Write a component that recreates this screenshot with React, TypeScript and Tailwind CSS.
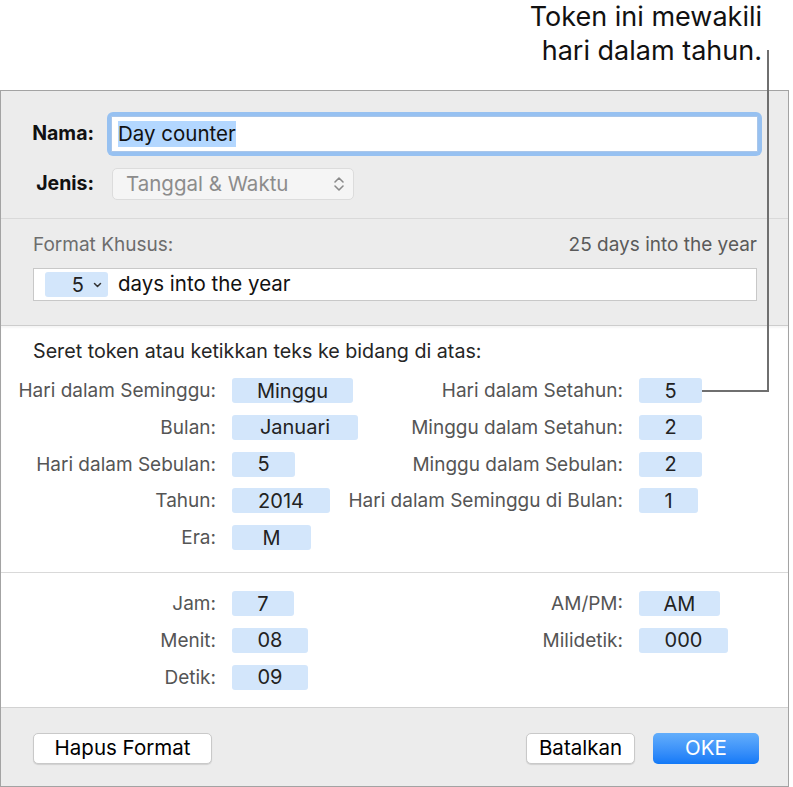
import { FC, ReactNode } from "react";

type Tok = { label: string; value: string; w: string };

const Token: FC<{ value: string; w: string }> = ({ value, w }) => (
  <div
    className={`flex h-[25px] shrink-0 items-center justify-center rounded-[3px] bg-[#d3e6fb] text-[20px] text-[#222] ${w}`}
  >
    {value}
  </div>
);

const Row: FC<{ t: Tok; labelW: string }> = ({ t, labelW }) => (
  <div className="flex h-[25px] items-center">
    <div
      className={`${labelW} shrink-0 whitespace-nowrap text-right text-[19px] leading-[25px] text-[#555]`}
    >
      {t.label}
    </div>
    <div className="ml-4">
      <Token value={t.value} w={t.w} />
    </div>
  </div>
);

const Column: FC<{ items: Tok[]; labelW: string; className?: string }> = ({
  items,
  labelW,
  className,
}) => (
  <div className={`flex flex-col gap-[11.75px] ${className ?? ""}`}>
    {items.map((t) => (
      <Row key={t.label} t={t} labelW={labelW} />
    ))}
  </div>
);

const dateLeft: Tok[] = [
  { label: "Hari dalam Seminggu:", value: "Minggu", w: "w-[121px]" },
  { label: "Bulan:", value: "Januari", w: "w-[126px]" },
  { label: "Hari dalam Sebulan:", value: "5", w: "w-[63px]" },
  { label: "Tahun:", value: "2014", w: "w-[98px]" },
  { label: "Era:", value: "M", w: "w-[79px]" },
];

const dateRight: Tok[] = [
  { label: "Hari dalam Setahun:", value: "5", w: "w-[63px]" },
  { label: "Minggu dalam Setahun:", value: "2", w: "w-[63px]" },
  { label: "Minggu dalam Sebulan:", value: "2", w: "w-[63px]" },
  { label: "Hari dalam Seminggu di Bulan:", value: "1", w: "w-[59px]" },
];

const timeLeft: Tok[] = [
  { label: "Jam:", value: "7", w: "w-[62px]" },
  { label: "Menit:", value: "08", w: "w-[76px]" },
  { label: "Detik:", value: "09", w: "w-[76px]" },
];

const timeRight: Tok[] = [
  { label: "AM/PM:", value: "AM", w: "w-[81px]" },
  { label: "Milidetik:", value: "000", w: "w-[89px]" },
];

const Button: FC<{ children: ReactNode; w: string; primary?: boolean }> = ({
  children,
  w,
  primary,
}) => (
  <button
    className={`flex h-[31px] items-center justify-center rounded-[5px] text-[20.5px] ${w} ${
      primary
        ? "bg-gradient-to-b from-[#63aefb] to-[#1179f7] text-white"
        : "border border-[#c9c9c9] bg-white text-black shadow-[0_1px_1px_rgba(0,0,0,0.12)]"
    }`}
  >
    {children}
  </button>
);

export default function App() {
  return (
    <div className="relative h-[787px] w-[793px] bg-white font-['Inter',sans-serif]">
      {/* callout */}
      <div className="h-[90px] pr-[31px] text-right text-[27px] leading-[34px] text-[#111]">
        <div>Token ini mewakili</div>
        <div>hari dalam tahun.</div>
      </div>

      <div className="flex h-[697px] w-[789px] flex-col border border-[#a3a3a3] bg-[#ececec]">
        {/* name + type */}
        <div className="flex flex-col gap-3 border-b border-[#d9d9d9] pb-[18px] pt-[21px]">
          <div className="flex items-center">
            <div className="w-[93px] text-right text-[19.5px] font-bold text-[#111]">
              Nama:
            </div>
            <div className="ml-[13px] h-[44px] w-[655px] rounded-[6px] bg-[#97c1f1] p-[4px]">
              <div className="flex h-full items-center border border-[#a9c6ea] bg-white pl-[6px]">
                <span className="bg-[#b3d7ff] text-[20.5px] leading-[26px] text-[#111]">
                  Day counter
                </span>
              </div>
            </div>
          </div>
          <div className="flex items-center">
            <div className="w-[93px] text-right text-[19.5px] font-bold text-[#111]">
              Jenis:
            </div>
            <div className="ml-[18px] flex h-[32px] w-[242px] items-center justify-between rounded-[5px] border border-[#dcdcdc] bg-[#f5f5f5] pl-[13px] pr-[8px]">
              <span className="text-[20.5px] text-[#8c8c8c]">Tanggal &amp; Waktu</span>
              <svg width="12" height="18" viewBox="0 0 12 18" fill="none">
                <path
                  d="M2 7 L6 3 L10 7 M2 11 L6 15 L10 11"
                  stroke="#8a8a8a"
                  strokeWidth="1.6"
                  strokeLinecap="round"
                  strokeLinejoin="round"
                />
              </svg>
            </div>
          </div>
        </div>

        {/* custom format */}
        <div className="border-b border-[#cdcdcd] pb-[24px] pl-8 pr-[31px] pt-[14px]">
          <div className="flex h-[24px] items-center justify-between text-[19px]">
            <span className="text-[#6d6d6d]">Format Khusus:</span>
            <span className="text-[#5a5a5a]">25 days into the year</span>
          </div>
          <div className="mt-[11px] flex h-[33px] items-center border border-[#c8c8c8] bg-white pl-[11px]">
            <div className="flex h-[25px] w-[63px] items-center justify-end gap-[9px] rounded-[3px] bg-[#d3e6fb] pr-[6px]">
              <span className="text-[20px] text-[#222]">5</span>
              <svg width="9" height="6" viewBox="0 0 9 6" fill="none">
                <path
                  d="M1.5 1.5 L4.5 4.5 L7.5 1.5"
                  stroke="#333"
                  strokeWidth="1.5"
                  strokeLinecap="round"
                  strokeLinejoin="round"
                />
              </svg>
            </div>
            <span className="ml-[10px] text-[20.5px] text-[#111]">days into the year</span>
          </div>
        </div>

        {/* date tokens */}
        <div className="border-b border-[#d9d9d9] bg-white pb-[22px] pt-[13px] shadow-[inset_0_2px_2px_rgba(0,0,0,0.04)]">
          <div className="pl-8 text-[19.7px] leading-[24px] text-[#262626]">
            Seret token atau ketikkan teks ke bidang di atas:
          </div>
          <div className="mt-[15px] flex">
            <Column items={dateLeft} labelW="w-[215px]" className="w-[320px]" />
            <Column items={dateRight} labelW="w-[302px]" />
          </div>
        </div>

        {/* time tokens */}
        <div className="flex border-b border-[#d2d2d2] bg-white pb-[17px] pt-[18px]">
          <Column items={timeLeft} labelW="w-[215px]" className="w-[320px]" />
          <Column items={timeRight} labelW="w-[302px]" />
        </div>

        {/* footer */}
        <div className="flex flex-1 items-start justify-between pl-8 pr-[29px] pt-[25px]">
          <Button w="w-[179px]">Hapus Format</Button>
          <div className="flex gap-[18px]">
            <Button w="w-[109px]">Batalkan</Button>
            <Button w="w-[106px]" primary>
              OKE
            </Button>
          </div>
        </div>
      </div>

      {/* callout leader line */}
      <svg
        className="pointer-events-none absolute left-0 top-0"
        width="793"
        height="787"
        viewBox="0 0 793 787"
      >
        <path d="M768 50 V391 H702" fill="none" stroke="#6f6f6f" strokeWidth="2" />
      </svg>
    </div>
  );
}
